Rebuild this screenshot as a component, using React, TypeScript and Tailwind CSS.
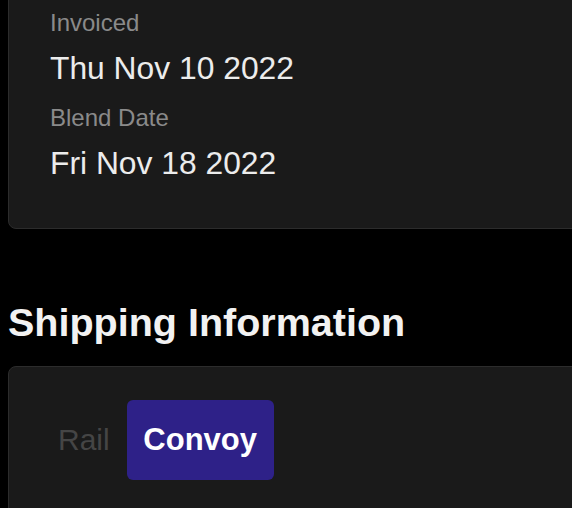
import React from "react";

function Field({ label, value, last }: { label: string; value: string; last?: boolean }) {
  return (
    <div className={last ? "" : "mb-[14px]"}>
      <p className="text-[24px] leading-[32px] text-[#8a8a8a]">{label}</p>
      <p className="mt-[9px] text-[31.8px] leading-[40px] text-[#ececec]">{value}</p>
    </div>
  );
}

export default function App() {
  return (
    <div
      className="min-h-screen w-[572px] overflow-hidden bg-black"
      style={{ fontFamily: '"Liberation Sans", Arial, sans-serif' }}
    >
      {/* Order dates card (top scrolled off) */}
      <div className="-mt-[20px] ml-2 w-[640px] rounded-lg border border-[#2c2c2c] bg-[#1a1a1a] pt-[26px] pb-[45px] pl-[41px]">
        <Field label="Invoiced" value="Thu Nov 10 2022" />
        <Field label="Blend Date" value="Fri Nov 18 2022" last />
      </div>

      <h2 className="mt-[69px] ml-2 text-[39.5px] font-bold leading-[48px] text-[#f2f2f2]">
        Shipping Information
      </h2>

      {/* Shipping method card */}
      <div className="mt-[20px] ml-2 w-[640px] rounded-lg border border-[#2c2c2c] bg-[#1a1a1a] pt-[33px] pb-[40px] pl-[49px]">
        <div className="flex items-center gap-[17px]">
          <span className="text-[30px] leading-[36px] text-[#454545]">Rail</span>
          <button className="flex h-[80px] w-[147px] items-center justify-center rounded-md bg-[#2e2188] text-[31px] font-bold text-white">
            Convoy
          </button>
        </div>
      </div>
    </div>
  );
}
